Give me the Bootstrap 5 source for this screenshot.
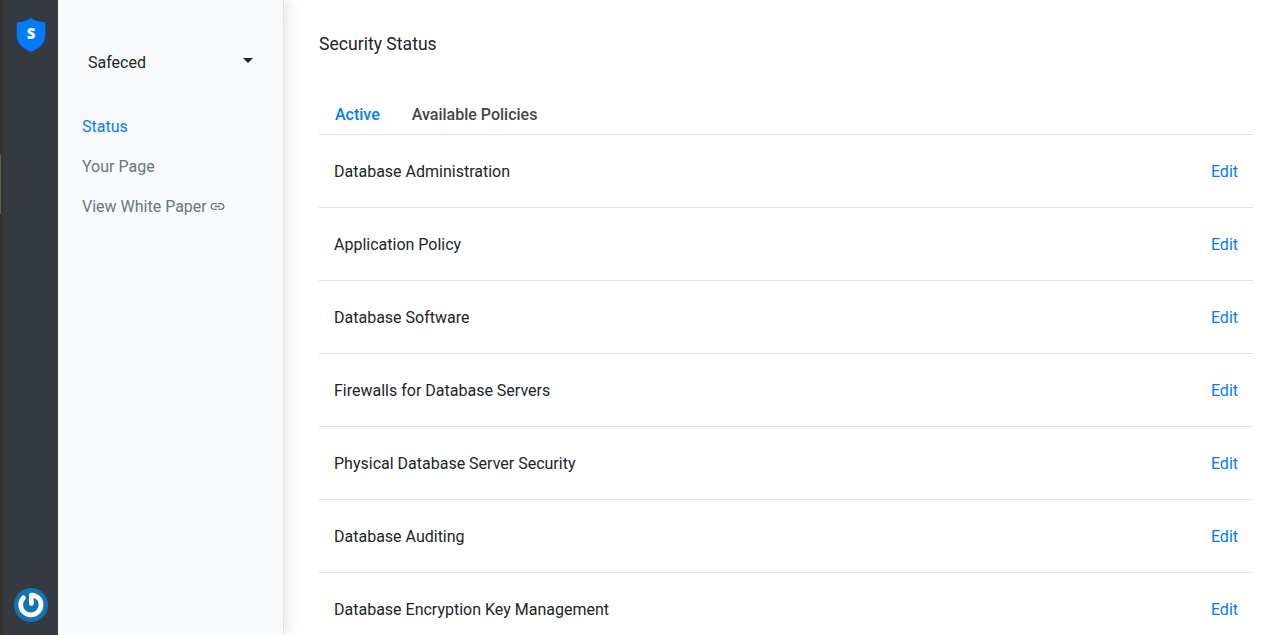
<!DOCTYPE html>
<html lang="en">
<head>
<meta charset="utf-8">
<meta name="viewport" content="width=device-width, initial-scale=1">
<title>Security Status</title>
<link href="https://cdn.jsdelivr.net/npm/bootstrap@5.3.0/dist/css/bootstrap.min.css" rel="stylesheet">
<style>
body { font-family: Roboto, sans-serif; color: #212529; line-height: 24px; }
a { text-decoration: none; color: #007bff; }
.app-rail { width: 58px; background: #343a40; border-left: 3px solid #33312d; padding: 17px 10px 13px 11px; position: relative; z-index: 2; }
.rail-thumb { position: absolute; left: -3px; top: 155px; width: 1px; height: 59px; background: #62625d; }
.app-side { width: 226px; background: #f8f9fa; border-right: 1px solid #dee2e6; box-shadow: 0 0 16px rgba(0,0,0,.15); padding: 51px 24px 0; z-index: 1; }
.team-switch { padding: 0 6px; margin-bottom: 32px; height: 24px; }
.team-switch svg { margin-top: -6px; }
.side-links { --bs-nav-link-padding-x: 0; --bs-nav-link-color: #6c757d; }
.side-links .active { color: #007bff; }
.side-links svg { margin-left: 2px; margin-top: -2px; }
.app-main { padding: 32px 27px 0 35px; }
.page-title { font-size: 17.6px; font-weight: 400; line-height: 24px; margin: 0 0 38px; }
.policy-tabs .nav-link { font-weight: 500; color: #454545; padding: 9px 16px 7px; }
.policy-tabs .nav-link.active { color: #007bff; }
.policy-list { --bs-list-group-border-color: #dee2e6; --bs-list-group-bg: transparent; --bs-list-group-color: #212529; }
.policy-list .list-group-item { padding: 25px 15px 23px; }
</style>
</head>
<body>
<div class="d-flex vh-100 overflow-hidden">
  <aside class="app-rail d-flex flex-column justify-content-between flex-shrink-0">
    <span class="rail-thumb"></span>
    <svg width="34" height="36" viewBox="0 0 34 36" role="img" aria-label="Safeced">
      <path d="M17 1 C22 4 26 5 31.3 5.2 V19 C31 27 24 32 17 35 C10 32 3 27 2.8 19 V5.2 C8 5 12 4 17 1Z" fill="#007bff"/>
      <text x="17" y="22" text-anchor="middle" font-family="Open Sans, sans-serif" font-weight="800" font-size="15" fill="#fff">S</text>
    </svg>
    <svg width="34" height="34" viewBox="0 0 34 34" role="img" aria-label="Account">
      <circle cx="17" cy="17" r="17" fill="#1174b5"/>
      <path d="M9.4 9.8 A10.2 10.2 0 1 0 24.8 10.3 Q22 7.2 17.4 7 V15.6" fill="none" stroke="#fff" stroke-width="4.7" stroke-linecap="round" stroke-linejoin="round"/>
    </svg>
  </aside>
  <aside class="app-side flex-shrink-0">
    <div class="team-switch d-flex justify-content-between align-items-center">
      <span>Safeced</span>
      <svg width="10" height="5" viewBox="0 0 10 5"><path d="M0 0H10L5 5Z" fill="#212529"/></svg>
    </div>
    <nav class="nav flex-column side-links">
      <a class="nav-link active" href="#">Status</a>
      <a class="nav-link" href="#">Your Page</a>
      <a class="nav-link d-flex align-items-center" href="#">View White Paper
        <svg width="17" height="17" viewBox="0 0 24 24" fill="currentColor"><path d="M3.9 12c0-1.71 1.39-3.1 3.1-3.1h4V7H7c-2.76 0-5 2.24-5 5s2.24 5 5 5h4v-1.9H7c-1.71 0-3.1-1.39-3.1-3.1zM8 13h8v-2H8v2zm9-6h-4v1.9h4c1.71 0 3.1 1.39 3.1 3.1s-1.39 3.1-3.1 3.1h-4V17h4c2.76 0 5-2.24 5-5s-2.24-5-5-5z"/></svg>
      </a>
    </nav>
  </aside>
  <main class="app-main flex-grow-1">
    <h1 class="page-title">Security Status</h1>
    <nav class="nav policy-tabs border-bottom">
      <a class="nav-link active" href="#">Active</a>
      <a class="nav-link" href="#">Available Policies</a>
    </nav>
    <div class="list-group list-group-flush policy-list">
      <div class="list-group-item d-flex justify-content-between"><span>Database Administration</span><a href="#">Edit</a></div>
      <div class="list-group-item d-flex justify-content-between"><span>Application Policy</span><a href="#">Edit</a></div>
      <div class="list-group-item d-flex justify-content-between"><span>Database Software</span><a href="#">Edit</a></div>
      <div class="list-group-item d-flex justify-content-between"><span>Firewalls for Database Servers</span><a href="#">Edit</a></div>
      <div class="list-group-item d-flex justify-content-between"><span>Physical Database Server Security</span><a href="#">Edit</a></div>
      <div class="list-group-item d-flex justify-content-between"><span>Database Auditing</span><a href="#">Edit</a></div>
      <div class="list-group-item d-flex justify-content-between"><span>Database Encryption Key Management</span><a href="#">Edit</a></div>
    </div>
  </main>
</div>
<script src="https://cdn.jsdelivr.net/npm/bootstrap@5.3.0/dist/js/bootstrap.bundle.min.js"></script>
</body>
</html>
